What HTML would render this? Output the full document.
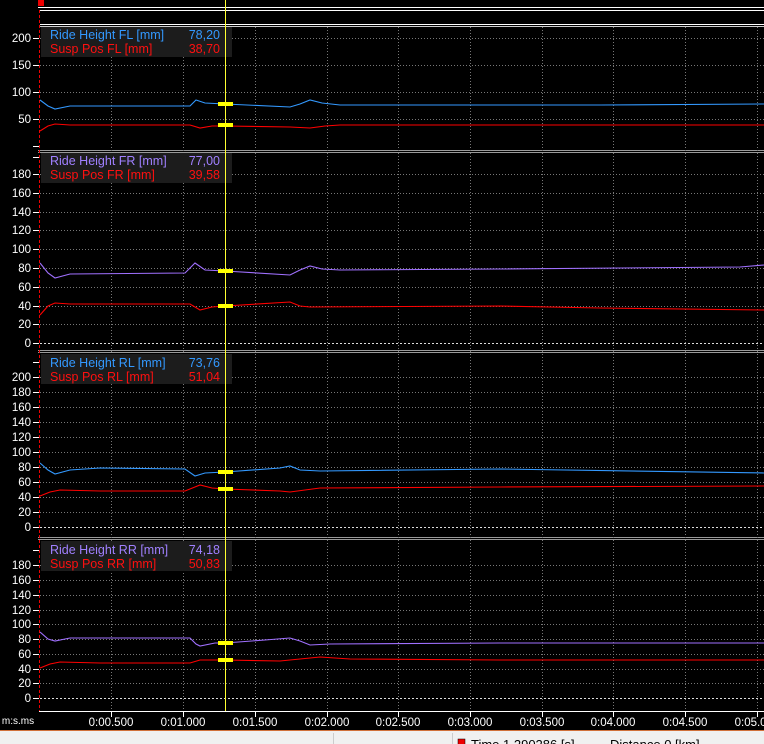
<!DOCTYPE html>
<html><head><meta charset="utf-8"><style>
body{margin:0;background:#000;width:764px;height:744px;overflow:hidden;font-family:"Liberation Sans",sans-serif}
svg{display:block}
</style></head><body>
<svg width="764" height="744" xmlns="http://www.w3.org/2000/svg" font-family="Liberation Sans, sans-serif">
<rect width="764" height="744" fill="#000"/>
<rect x="38" y="0" width="6" height="6" fill="#e00"/>
<line x1="38" y1="7.5" x2="764" y2="7.5" stroke="#fff"/>
<line x1="40" y1="10.5" x2="764" y2="10.5" stroke="#fff"/>
<line x1="40" y1="24.5" x2="764" y2="24.5" stroke="#fff"/>
<line x1="40" y1="26.5" x2="764" y2="26.5" stroke="#ccc"/>
<g stroke="#999">
<line x1="38" y1="150.5" x2="764" y2="150.5"/><line x1="38" y1="152.5" x2="764" y2="152.5"/>
<line x1="38" y1="350.5" x2="764" y2="350.5"/><line x1="38" y1="352.5" x2="764" y2="352.5"/>
<line x1="38" y1="537.5" x2="764" y2="537.5"/><line x1="38" y1="539.5" x2="764" y2="539.5"/>
</g>
<g stroke="#777" stroke-dasharray="1,2">
<line x1="111.5" y1="27" x2="111.5" y2="710"/><line x1="183.5" y1="27" x2="183.5" y2="710"/>
<line x1="255.5" y1="27" x2="255.5" y2="710"/><line x1="327.5" y1="27" x2="327.5" y2="710"/>
<line x1="398.5" y1="27" x2="398.5" y2="710"/><line x1="470.5" y1="27" x2="470.5" y2="710"/>
<line x1="542.5" y1="27" x2="542.5" y2="710"/><line x1="613.5" y1="27" x2="613.5" y2="710"/>
<line x1="685.5" y1="27" x2="685.5" y2="710"/><line x1="757.5" y1="27" x2="757.5" y2="710"/>
</g>
<g stroke="#777" stroke-dasharray="1,2">
<line x1="40" y1="38.5" x2="764" y2="38.5"/><line x1="40" y1="65.5" x2="764" y2="65.5"/><line x1="40" y1="92.5" x2="764" y2="92.5"/><line x1="40" y1="119.5" x2="764" y2="119.5"/>
<line x1="40" y1="174.5" x2="764" y2="174.5"/><line x1="40" y1="193.5" x2="764" y2="193.5"/><line x1="40" y1="212.5" x2="764" y2="212.5"/><line x1="40" y1="230.5" x2="764" y2="230.5"/><line x1="40" y1="249.5" x2="764" y2="249.5"/><line x1="40" y1="268.5" x2="764" y2="268.5"/><line x1="40" y1="287.5" x2="764" y2="287.5"/><line x1="40" y1="306.5" x2="764" y2="306.5"/><line x1="40" y1="324.5" x2="764" y2="324.5"/>
<line x1="40" y1="377.5" x2="764" y2="377.5"/><line x1="40" y1="392.5" x2="764" y2="392.5"/><line x1="40" y1="407.5" x2="764" y2="407.5"/><line x1="40" y1="422.5" x2="764" y2="422.5"/><line x1="40" y1="437.5" x2="764" y2="437.5"/><line x1="40" y1="452.5" x2="764" y2="452.5"/><line x1="40" y1="467.5" x2="764" y2="467.5"/><line x1="40" y1="482.5" x2="764" y2="482.5"/><line x1="40" y1="497.5" x2="764" y2="497.5"/><line x1="40" y1="512.5" x2="764" y2="512.5"/>
<line x1="40" y1="565.5" x2="764" y2="565.5"/><line x1="40" y1="580.5" x2="764" y2="580.5"/><line x1="40" y1="595.5" x2="764" y2="595.5"/><line x1="40" y1="610.5" x2="764" y2="610.5"/><line x1="40" y1="624.5" x2="764" y2="624.5"/><line x1="40" y1="639.5" x2="764" y2="639.5"/><line x1="40" y1="654.5" x2="764" y2="654.5"/><line x1="40" y1="669.5" x2="764" y2="669.5"/><line x1="40" y1="683.5" x2="764" y2="683.5"/>
</g>
<g stroke="#ddd" stroke-dasharray="2,2">
<line x1="40" y1="343.5" x2="764" y2="343.5"/><line x1="40" y1="527.5" x2="764" y2="527.5"/><line x1="40" y1="698.5" x2="764" y2="698.5"/>
</g>
<line x1="39.5" y1="10" x2="39.5" y2="711" stroke="#e00" stroke-dasharray="3,2"/>
<g stroke="#fff">
<line x1="33" y1="38.5" x2="39" y2="38.5"/><line x1="33" y1="65.5" x2="39" y2="65.5"/><line x1="33" y1="92.5" x2="39" y2="92.5"/><line x1="33" y1="119.5" x2="39" y2="119.5"/><line x1="33" y1="146.5" x2="39" y2="146.5"/>
<line x1="33" y1="157.5" x2="39" y2="157.5"/><line x1="33" y1="174.5" x2="39" y2="174.5"/><line x1="33" y1="193.5" x2="39" y2="193.5"/><line x1="33" y1="212.5" x2="39" y2="212.5"/><line x1="33" y1="230.5" x2="39" y2="230.5"/><line x1="33" y1="249.5" x2="39" y2="249.5"/><line x1="33" y1="268.5" x2="39" y2="268.5"/><line x1="33" y1="287.5" x2="39" y2="287.5"/><line x1="33" y1="306.5" x2="39" y2="306.5"/><line x1="33" y1="324.5" x2="39" y2="324.5"/><line x1="33" y1="343.5" x2="39" y2="343.5"/>
<line x1="33" y1="362.5" x2="39" y2="362.5"/><line x1="33" y1="377.5" x2="39" y2="377.5"/><line x1="33" y1="392.5" x2="39" y2="392.5"/><line x1="33" y1="407.5" x2="39" y2="407.5"/><line x1="33" y1="422.5" x2="39" y2="422.5"/><line x1="33" y1="437.5" x2="39" y2="437.5"/><line x1="33" y1="452.5" x2="39" y2="452.5"/><line x1="33" y1="467.5" x2="39" y2="467.5"/><line x1="33" y1="482.5" x2="39" y2="482.5"/><line x1="33" y1="497.5" x2="39" y2="497.5"/><line x1="33" y1="512.5" x2="39" y2="512.5"/><line x1="33" y1="527.5" x2="39" y2="527.5"/>
<line x1="33" y1="550.5" x2="39" y2="550.5"/><line x1="33" y1="565.5" x2="39" y2="565.5"/><line x1="33" y1="580.5" x2="39" y2="580.5"/><line x1="33" y1="595.5" x2="39" y2="595.5"/><line x1="33" y1="610.5" x2="39" y2="610.5"/><line x1="33" y1="624.5" x2="39" y2="624.5"/><line x1="33" y1="639.5" x2="39" y2="639.5"/><line x1="33" y1="654.5" x2="39" y2="654.5"/><line x1="33" y1="669.5" x2="39" y2="669.5"/><line x1="33" y1="683.5" x2="39" y2="683.5"/><line x1="33" y1="698.5" x2="39" y2="698.5"/>
</g>
<g fill="#fff" font-size="11.5" text-anchor="end">
<text x="31" y="42">200</text><text x="31" y="69">150</text><text x="31" y="96">100</text><text x="31" y="123">50</text>
<text x="31" y="178">180</text><text x="31" y="197">160</text><text x="31" y="216">140</text><text x="31" y="234">120</text><text x="31" y="253">100</text><text x="31" y="272">80</text><text x="31" y="291">60</text><text x="31" y="310">40</text><text x="31" y="328">20</text><text x="31" y="347">0</text>
<text x="31" y="381">200</text><text x="31" y="396">180</text><text x="31" y="411">160</text><text x="31" y="426">140</text><text x="31" y="441">120</text><text x="31" y="456">100</text><text x="31" y="471">80</text><text x="31" y="486">60</text><text x="31" y="501">40</text><text x="31" y="516">20</text><text x="31" y="531">0</text>
<text x="31" y="569">180</text><text x="31" y="584">160</text><text x="31" y="599">140</text><text x="31" y="614">120</text><text x="31" y="628">100</text><text x="31" y="643">80</text><text x="31" y="658">60</text><text x="31" y="673">40</text><text x="31" y="687">20</text><text x="31" y="702">0</text>
</g>
<line x1="39" y1="711.5" x2="764" y2="711.5" stroke="#fff"/>
<g stroke="#fff">
<line x1="111.5" y1="711" x2="111.5" y2="717"/><line x1="183.5" y1="711" x2="183.5" y2="717"/><line x1="255.5" y1="711" x2="255.5" y2="717"/><line x1="327.5" y1="711" x2="327.5" y2="717"/><line x1="398.5" y1="711" x2="398.5" y2="717"/><line x1="470.5" y1="711" x2="470.5" y2="717"/><line x1="542.5" y1="711" x2="542.5" y2="717"/><line x1="613.5" y1="711" x2="613.5" y2="717"/><line x1="685.5" y1="711" x2="685.5" y2="717"/><line x1="757.5" y1="711" x2="757.5" y2="717"/>
</g>
<g fill="#fff" font-size="11.5" text-anchor="middle">
<text x="18" y="724" font-size="10">m:s.ms</text>
<text x="111" y="726">0:00.500</text><text x="183" y="726">0:01.000</text><text x="255" y="726">0:01.500</text><text x="327" y="726">0:02.000</text><text x="398" y="726">0:02.500</text><text x="470" y="726">0:03.000</text><text x="542" y="726">0:03.500</text><text x="613" y="726">0:04.000</text><text x="685" y="726">0:04.500</text><text x="757" y="726">0:05.000</text>
</g>
<g fill="none" stroke-width="1.1">
<polyline stroke="#3399ff" points="40,100 48,106 55,109 70,106 190,106 196,100 205,103 225,104 290,107 300,104 310,100 322,103 340,105 600,105 764,104"/>
<polyline stroke="#ff0000" points="40,131 48,126 55,124 70,125 190,125 200,128 212,126 225,126 290,127 310,128 325,126 340,125 764,125"/>
<polyline stroke="#a070ff" points="40,263 48,273 55,278 70,274 185,273 195,263 205,270 225,271 290,275 300,270 310,266 322,269 340,270 500,269 740,267 764,265"/>
<polyline stroke="#ff0000" points="40,315 48,306 55,303 70,304 190,304 200,310 212,307 225,306 290,302 300,306 310,307 500,306 600,308 764,310"/>
<polyline stroke="#3399ff" points="40,463 48,470 55,474 70,470 100,468 185,469 195,476 205,473 225,472 280,468 290,466 300,470 320,471 500,469 764,473"/>
<polyline stroke="#ff0000" points="40,496 50,492 60,490 100,491 185,491 200,485 212,488 225,489 280,491 290,492 320,488 500,487 764,486"/>
<polyline stroke="#a070ff" points="40,632 48,639 55,641 70,638 190,638 196,644 200,646 215,643 225,643 265,640 290,638 300,641 310,645 330,644 500,643 764,643"/>
<polyline stroke="#ff0000" points="40,668 50,664 60,662 100,663 190,663 200,660 225,660 280,661 300,659 320,657 350,659 500,660 764,660"/>
</g>
<g fill="#1c1c1c">
<rect x="41" y="27" width="191" height="30"/><rect x="41" y="153" width="191" height="30"/><rect x="41" y="354" width="191" height="30"/><rect x="41" y="541" width="191" height="30"/>
</g>
<g font-size="12.5">
<text x="50" y="39" fill="#3399ff">Ride Height FL [mm]</text><text x="220" y="39" fill="#3399ff" text-anchor="end">78,20</text>
<text x="50" y="53" fill="#ff1010">Susp Pos FL [mm]</text><text x="220" y="53" fill="#ff1010" text-anchor="end">38,70</text>
<text x="50" y="165" fill="#a080ff">Ride Height FR [mm]</text><text x="220" y="165" fill="#a080ff" text-anchor="end">77,00</text>
<text x="50" y="179" fill="#ff1010">Susp Pos FR [mm]</text><text x="220" y="179" fill="#ff1010" text-anchor="end">39,58</text>
<text x="50" y="367" fill="#3399ff">Ride Height RL [mm]</text><text x="220" y="367" fill="#3399ff" text-anchor="end">73,76</text>
<text x="50" y="381" fill="#ff1010">Susp Pos RL [mm]</text><text x="220" y="381" fill="#ff1010" text-anchor="end">51,04</text>
<text x="50" y="554" fill="#a080ff">Ride Height RR [mm]</text><text x="220" y="554" fill="#a080ff" text-anchor="end">74,18</text>
<text x="50" y="568" fill="#ff1010">Susp Pos RR [mm]</text><text x="220" y="568" fill="#ff1010" text-anchor="end">50,83</text>
</g>
<line x1="225.5" y1="0" x2="225.5" y2="711" stroke="#ffff30"/>
<g stroke="#ffff00" stroke-width="4">
<line x1="218" y1="104" x2="233" y2="104"/><line x1="218" y1="125" x2="233" y2="125"/>
<line x1="218" y1="271" x2="233" y2="271"/><line x1="218" y1="306" x2="233" y2="306"/>
<line x1="218" y1="472" x2="233" y2="472"/><line x1="218" y1="489" x2="233" y2="489"/>
<line x1="218" y1="643" x2="233" y2="643"/><line x1="218" y1="660" x2="233" y2="660"/>
</g>
<rect x="0" y="730" width="764" height="14" fill="#f0f0f0"/>
<line x1="0" y1="730.5" x2="764" y2="730.5" stroke="#d0703a"/>
<line x1="333.5" y1="733" x2="333.5" y2="744" stroke="#ccc"/>
<line x1="452.5" y1="733" x2="452.5" y2="744" stroke="#ccc"/>
<rect x="458" y="739" width="7" height="7" fill="#e00" stroke="#000" stroke-width="0.5"/>
<g font-size="13" fill="#000"><text x="471" y="749">Time  1.290286 [s]</text><text x="610" y="749">Distance  0 [km]</text></g>
</svg>
</body></html>
